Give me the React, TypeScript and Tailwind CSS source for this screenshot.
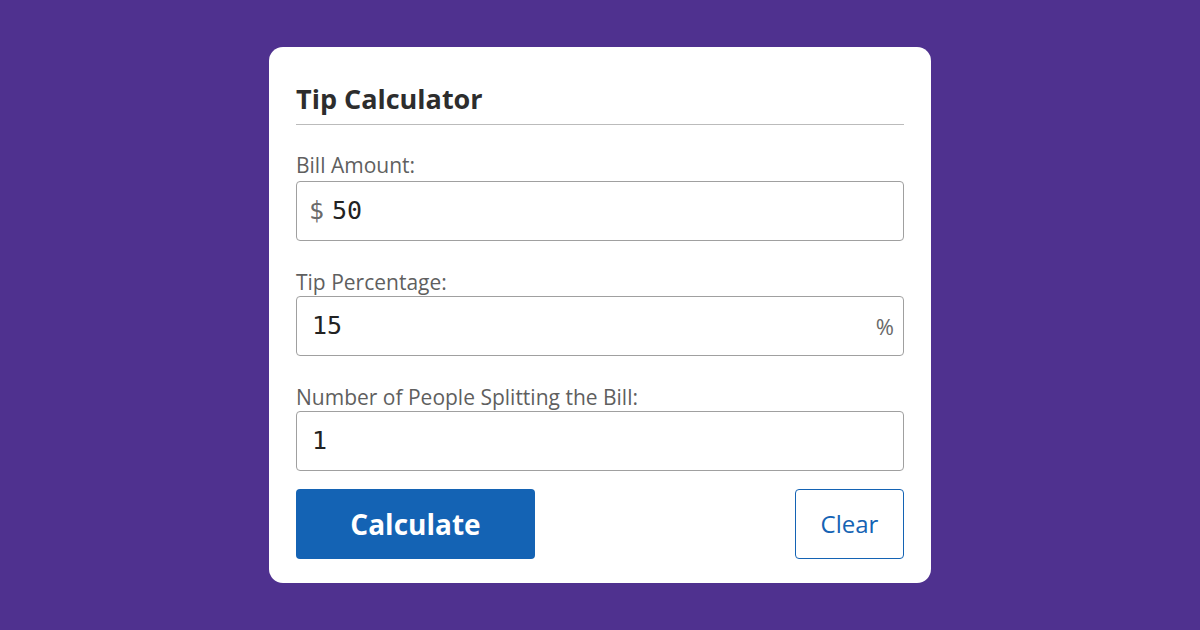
import React from "react";

export default function App() {
  const font = { fontFamily: '"Open Sans", "Noto Sans", sans-serif' };
  const mono = { fontFamily: '"DejaVu Sans Mono", monospace' };
  return (
    <div className="w-[1200px] h-[630px] bg-[#4f318f] flex justify-center pt-[47px]" style={font}>
      <div className="w-[662px] h-[536px] bg-white rounded-[14px] px-[27px] pt-[27px] flex flex-col">
        <div className="h-[51px] border-b border-[#bbbbbb] flex items-start">
          <h2 className="text-[27px] leading-[52px] -mt-[1px] font-bold text-[#2d2d2d]">Tip Calculator</h2>
        </div>
        <label className="mt-[26px] text-[21px] leading-[28px] text-[#5f5f5f]">Bill Amount:</label>
        <div className="mt-[2px] h-[60px] border border-[#a0a0a0] rounded-[4px] flex items-center pl-[12px] pr-[13px]">
          <span className="text-[25px] text-[#6a6a6a] mr-[8px]" style={mono}>$</span>
          <span className="text-[25px] text-[#222]" style={mono}>50</span>
        </div>
        <label className="mt-[27px] text-[21px] leading-[28px] text-[#5f5f5f]">Tip Percentage:</label>
        <div className="h-[60px] border border-[#a0a0a0] rounded-[4px] flex items-center pl-[15px] pr-[9px]">
          <span className="flex-1 text-[25px] text-[#222]" style={mono}>15</span>
          <span className="text-[22px] text-[#6a6a6a]">%</span>
        </div>
        <label className="mt-[27px] text-[21px] leading-[28px] text-[#5f5f5f]">Number of People Splitting the Bill:</label>
        <div className="h-[60px] border border-[#a0a0a0] rounded-[4px] flex items-center pl-[15px]">
          <span className="text-[25px] text-[#222]" style={mono}>1</span>
        </div>
        <div className="mt-[18px] flex justify-between">
          <button className="w-[239px] h-[70px] bg-[#1463b4] rounded-[4px] text-white text-[28px] font-bold">Calculate</button>
          <button className="w-[109px] h-[70px] border border-[#1463b4] rounded-[4px] text-[#1463b4] text-[24px]">Clear</button>
        </div>
      </div>
    </div>
  );
}
